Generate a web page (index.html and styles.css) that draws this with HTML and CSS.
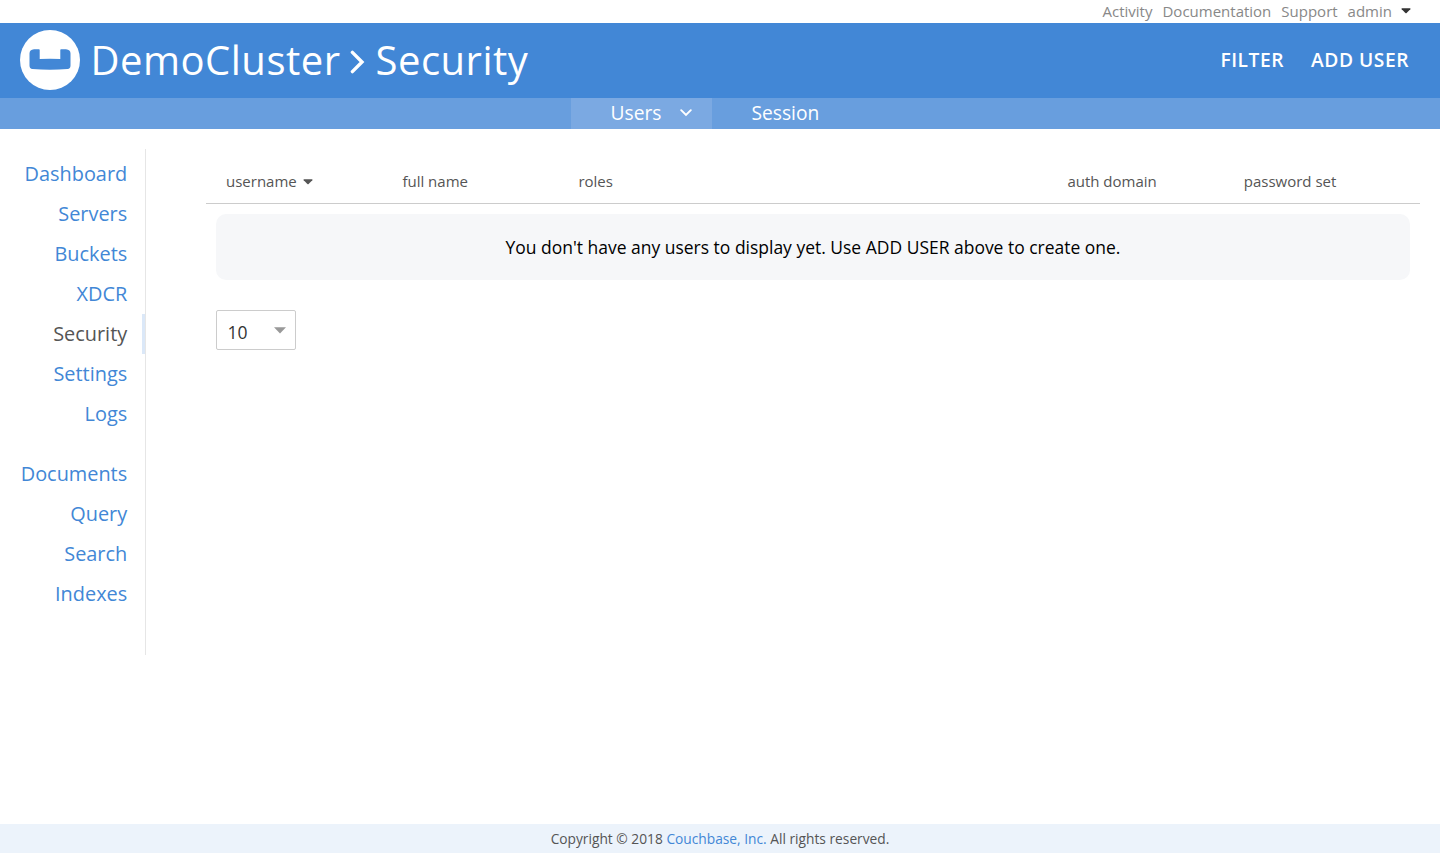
FILE: index.html
```html
<!DOCTYPE html>
<html lang="en">
<head>
<meta charset="utf-8">
<title>DemoCluster - Security</title>
<link rel="stylesheet" href="styles.css">
</head>
<body>
<nav class="top-links">
  <a>Activity</a><a>Documentation</a><a>Support</a><a>admin</a>
  <svg class="caret" width="10" height="6" viewBox="0 0 10 6"><path d="M1 .3h8q.8.2.3.9L5.6 5.1q-.6.5-1.2 0L.7 1.2Q.2.5 1 .3z" fill="#333"/></svg>
</nav>
<header class="header">
  <svg class="logo" width="60" height="60" viewBox="0 0 60 60">
    <circle cx="30" cy="30" r="30" fill="#fff"/>
    <path d="M14 19.300h5q.7 0 .7.700V29q10.300-.7 20.600 0V20q0-.7.7-.7h5q4.500.4 4.500 4.200v12q0 3.100-3 3.500-17.500 1.600-35 0-3-.4-3-3.500v-12q0-3.800 4.500-4.200z" fill="#4287d6"/>
  </svg>
  <h1 class="title"><span class="cluster">DemoCluster</span><svg class="chevron" width="16" height="24" viewBox="0 0 16 24"><path d="M2.400 2.400 12 12 2.400 21.600" fill="none" stroke="#fff" stroke-width="3.400" stroke-linecap="round" stroke-linejoin="miter"/></svg><span class="section">Security</span></h1>
  <div class="actions"><a>FILTER</a><a>ADD USER</a></div>
</header>
<nav class="tabs">
  <a class="tab active">Users<svg class="tab-arrow" width="12" height="8" viewBox="0 0 12 8"><path d="M1.200 1.200 6 6l4.800-4.800" fill="none" stroke="#fff" stroke-width="1.900" stroke-linecap="round"/></svg></a>
  <a class="tab">Session</a>
</nav>
<div class="body">
  <aside class="sidebar">
    <a>Dashboard</a><a>Servers</a><a>Buckets</a><a>XDCR</a><a class="current">Security</a><a>Settings</a><a>Logs</a>
    <a class="group-start">Documents</a><a>Query</a><a>Search</a><a>Indexes</a>
  </aside>
  <main class="content">
    <div class="table-head">
      <span>username<svg class="sort" width="10" height="6" viewBox="0 0 10 6"><path d="M1 .3h8q.8.2.3.9L5.600 5.100q-.6.5-1.200 0L.7 1.200Q.2.5 1 .3z" fill="#555"/></svg></span>
      <span>full name</span><span>roles</span><span>auth domain</span><span>password set</span>
    </div>
    <div class="empty">You don't have any users to display yet. Use ADD USER above to create one.</div>
    <div class="page-size">10<svg width="12" height="7" viewBox="0 0 12 7"><path d="M0 .2h12L6 6.600z" fill="#999"/></svg></div>
  </main>
</div>
<footer class="footer"><p>Copyright © 2018 <a>Couchbase, Inc.</a> All rights reserved.</p></footer>
</body>
</html>
```

FILE: styles.css
```css
* { box-sizing: border-box; }
body {
  margin: 0;
  height: 853px;
  display: flex;
  flex-direction: column;
  font-family: "Open Sans", sans-serif;
  color: #555;
  background: #fff;
}
.top-links {
  height: 23px;
  display: flex;
  justify-content: flex-end;
  align-items: center;
  gap: 10px;
  padding-right: 29px;
  font-size: 15px;
  line-height: 23px;
  color: #888;
}
.caret { margin-left: -1px; margin-top: -1px; }
.header {
  height: 75px;
  display: flex;
  align-items: center;
  padding: 0 31px 0 20px;
  background: #4287d6;
  color: #fff;
}
.logo { margin-top: -1px; }
.title {
  display: flex;
  align-items: center;
  margin: 0 0 2px 10.5px;
  font-size: 40px;
  font-weight: 400;
  line-height: 73px;
  letter-spacing: .5px;
}
.chevron { margin: 5px 10px 0 9px; }
.actions {
  display: flex;
  gap: 27px;
  margin: 0 0 2px auto;
  font-size: 19.2px;
  font-weight: 600;
  letter-spacing: .55px;
}
.tabs {
  height: 31px;
  display: flex;
  padding-left: 571px;
  background: #689ede;
  color: #fff;
}
.tab {
  display: flex;
  align-items: center;
  padding: 0 20px 2px 39.5px;
  font-size: 19.2px;
  line-height: 29px;
}
.tab.active { width: 141px; background: #7ba9e2; }
.tab-arrow { margin-left: auto; margin-top: 1px; }
.body { flex: 1; display: flex; align-items: flex-start; }
.sidebar {
  width: 146px;
  height: 506px;
  margin-top: 20px;
  padding-top: 5px;
  border-right: 1px solid #e6e6e6;
  display: flex;
  flex-direction: column;
}
.sidebar a {
  height: 40px;
  padding-right: 14.8px;
  border-right: 3px solid transparent;
  font-size: 19.9px;
  line-height: 40px;
  text-align: right;
  color: #4287d6;
}
.sidebar .current { color: #555; border-right-color: #dbe8f8; }
.sidebar .group-start { margin-top: 20px; }
.content { flex: 1; padding: 31px 20px 0 60px; }
.table-head {
  height: 44px;
  display: grid;
  grid-template-columns: 176.4px 176px 489px 176.4px 1fr;
  padding-left: 20px;
  border-bottom: 1px solid #ccc;
  font-size: 15px;
  line-height: 43px;
}
.sort { margin-left: 6px; vertical-align: 2px; }
.empty {
  height: 66px;
  margin: 10px 10px 30px;
  border-radius: 10px;
  background: #f6f7f9;
  color: #000;
  font-size: 17.48px;
  line-height: 66px;
  text-align: center;
}
.page-size {
  width: 80px;
  height: 40px;
  margin-left: 10px;
  padding: 3px 9px 0 10.5px;
  display: flex;
  align-items: center;
  justify-content: space-between;
  border: 1px solid #ccc;
  border-radius: 2px;
  color: #333;
  font-size: 17.5px;
}
.page-size svg { margin-top: -3px; }
.footer {
  height: 29px;
  background: #ecf3fb;
  text-align: center;
  font-size: 13.75px;
  line-height: 29px;
}
.footer p { margin: 0; }
.footer a { color: #4287d6; }
```
